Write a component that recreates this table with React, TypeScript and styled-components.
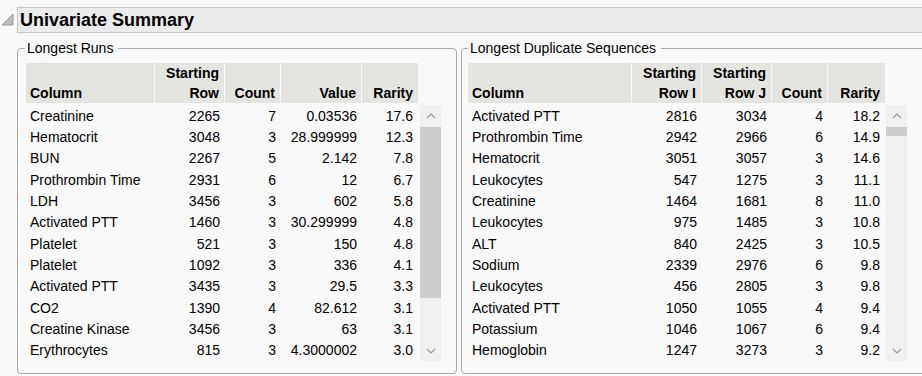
import React from 'react'
import styled, { createGlobalStyle } from 'styled-components'

const GlobalStyle = createGlobalStyle`
    html, body {
        margin: 0;
        padding: 0;
        background: #f9f9f9;
        overflow: hidden;
    }
    body {
        font-family: "Liberation Sans", Arial, sans-serif;
        color: #000;
    }
`

const Page = styled.div`
    width: 960px;
    padding-top: 7px;
`

const OutlineRow = styled.div`
    display: flex;
    align-items: stretch;
`

const Toggle = styled.div`
    width: 17px;
    display: flex;
    align-items: flex-start;
    padding-top: 6px;
    box-sizing: border-box;
`

const TitleBar = styled.div`
    flex: 1;
    height: 26px;
    box-sizing: border-box;
    background: #ebebeb;
    border: 1px solid #c9c9c9;
    border-right: none;
    display: flex;
    align-items: center;
    padding-left: 2px;
    font-size: 18px;
    font-weight: bold;
`

const Panels = styled.div`
    display: flex;
    gap: 4px;
    margin: 7px 0 0 17px;
`

const Group = styled.fieldset<{ $width: number; $inset: number }>`
    width: ${p => p.$width}px;
    box-sizing: border-box;
    margin: 0;
    padding: 6px 0 12px ${p => p.$inset}px;
    border: 1px solid #a9a9a9;
    border-radius: 4px;
    min-width: 0;
`

const Legend = styled.legend<{ $shift: number }>`
    font-size: 14px;
    line-height: 17px;
    margin-left: ${p => p.$shift}px;
    padding: 0 5px 0 2px;
`

const TableWrap = styled.div<{ $gap: number }>`
    display: grid;
    grid-template-columns: max-content 21px;
    justify-content: start;
    column-gap: ${p => p.$gap}px;
`

const Grid = styled.div<{ $cols: string }>`
    display: grid;
    grid-template-columns: ${p => p.$cols};
    grid-row: 1 / span 2;
`

const HeadCell = styled.div<{ $left?: boolean; $last?: boolean }>`
    height: 40px;
    box-sizing: border-box;
    background: #e4e4e0;
    border-right: ${p => (p.$last ? 'none' : '1px solid #f9f9f9')};
    margin-bottom: 2px;
    display: flex;
    flex-direction: column;
    justify-content: flex-end;
    align-items: ${p => (p.$left ? 'flex-start' : 'flex-end')};
    padding: 0 5px 0 4px;
    font-size: 14px;
    font-weight: bold;
    line-height: 20px;
    white-space: nowrap;
`

const Cell = styled.div<{ $left?: boolean }>`
    height: 21.33px;
    display: flex;
    align-items: center;
    justify-content: ${p => (p.$left ? 'flex-start' : 'flex-end')};
    padding: 0 5px 0 4px;
    font-size: 14px;
    white-space: nowrap;
`

const HeadSpacer = styled.div`
    grid-column: 2;
    grid-row: 1;
    height: 42px;
`

const Scrollbar = styled.div`
    grid-column: 2;
    grid-row: 2;
    height: 256px;
    background: #f0f0f0;
    display: flex;
    flex-direction: column;
`

const ArrowButton = styled.div`
    height: 21px;
    display: flex;
    align-items: center;
    justify-content: center;
    flex: none;
`

const Track = styled.div`
    flex: 1;
    padding-top: 1px;
`

const Thumb = styled.div<{ $size: number }>`
    height: ${p => p.$size}px;
    background: #cdcdcd;
`

const Chevron = ({ up }: { up?: boolean }) => (
    <svg width="10" height="6" viewBox="0 0 10 6">
        <polyline
            points={up ? '1,5 5,1 9,5' : '1,1 5,5 9,1'}
            fill="none"
            stroke="#a3a3a3"
            strokeWidth="1.3"
        />
    </svg>
)

type Column = { label: string[]; width: number; left?: boolean }

const DataTable = (props: { columns: Column[]; rows: (string | number)[][]; thumb: number; gap: number }) => {
    const cols = props.columns.map(c => c.width + 'px').join(' ')
    return (
        <TableWrap $gap={props.gap}>
            <Grid $cols={cols}>
                {props.columns.map((c, i) => (
                    <HeadCell key={i} $left={c.left} $last={i === props.columns.length - 1}>
                        {c.label.map(l => <span key={l}>{l}</span>)}
                    </HeadCell>
                ))}
                {props.rows.map((r, ri) =>
                    r.map((v, ci) => (
                        <Cell key={ri + '-' + ci} $left={props.columns[ci].left}>{v}</Cell>
                    ))
                )}
            </Grid>
            <HeadSpacer />
            <Scrollbar>
                <ArrowButton><Chevron up /></ArrowButton>
                <Track><Thumb $size={props.thumb} /></Track>
                <ArrowButton><Chevron /></ArrowButton>
            </Scrollbar>
        </TableWrap>
    )
}

const runColumns: Column[] = [
    { label: ['Column'], width: 129, left: true },
    { label: ['Starting', 'Row'], width: 70 },
    { label: ['Count'], width: 56 },
    { label: ['Value'], width: 81 },
    { label: ['Rarity'], width: 56 },
]

const runRows = [
    ['Creatinine', 2265, 7, '0.03536', '17.6'],
    ['Hematocrit', 3048, 3, '28.999999', '12.3'],
    ['BUN', 2267, 5, '2.142', '7.8'],
    ['Prothrombin Time', 2931, 6, '12', '6.7'],
    ['LDH', 3456, 3, '602', '5.8'],
    ['Activated PTT', 1460, 3, '30.299999', '4.8'],
    ['Platelet', 521, 3, '150', '4.8'],
    ['Platelet', 1092, 3, '336', '4.1'],
    ['Activated PTT', 3435, 3, '29.5', '3.3'],
    ['CO2', 1390, 4, '82.612', '3.1'],
    ['Creatine Kinase', 3456, 3, '63', '3.1'],
    ['Erythrocytes', 815, 3, '4.3000002', '3.0'],
]

const dupColumns: Column[] = [
    { label: ['Column'], width: 164, left: true },
    { label: ['Starting', 'Row I'], width: 70 },
    { label: ['Starting', 'Row J'], width: 70 },
    { label: ['Count'], width: 56 },
    { label: ['Rarity'], width: 57 },
]

const dupRows = [
    ['Activated PTT', 2816, 3034, 4, '18.2'],
    ['Prothrombin Time', 2942, 2966, 6, '14.9'],
    ['Hematocrit', 3051, 3057, 3, '14.6'],
    ['Leukocytes', 547, 1275, 3, '11.1'],
    ['Creatinine', 1464, 1681, 8, '11.0'],
    ['Leukocytes', 975, 1485, 3, '10.8'],
    ['ALT', 840, 2425, 3, '10.5'],
    ['Sodium', 2339, 2976, 6, '9.8'],
    ['Leukocytes', 456, 2805, 3, '9.8'],
    ['Activated PTT', 1050, 1055, 4, '9.4'],
    ['Potassium', 1046, 1067, 6, '9.4'],
    ['Hemoglobin', 1247, 3273, 3, '9.2'],
]

const App = () => (
    <Page>
        <GlobalStyle />
        <OutlineRow>
            <Toggle>
                <svg width="14" height="13" viewBox="0 0 14 13">
                    <polygon points="2,12 13,12 13,1" fill="#bdbdbd" stroke="#9a9a9a" strokeWidth="1" />
                </svg>
            </Toggle>
            <TitleBar>Univariate Summary</TitleBar>
        </OutlineRow>
        <Panels>
            <Group $width={440} $inset={8}>
                <Legend $shift={-1}>Longest Runs</Legend>
                <DataTable columns={runColumns} rows={runRows} thumb={171} gap={2} />
            </Group>
            <Group $width={480} $inset={6}>
                <Legend $shift={0}>Longest Duplicate Sequences</Legend>
                <DataTable columns={dupColumns} rows={dupRows} thumb={9} gap={1} />
            </Group>
        </Panels>
    </Page>
)

export default App
